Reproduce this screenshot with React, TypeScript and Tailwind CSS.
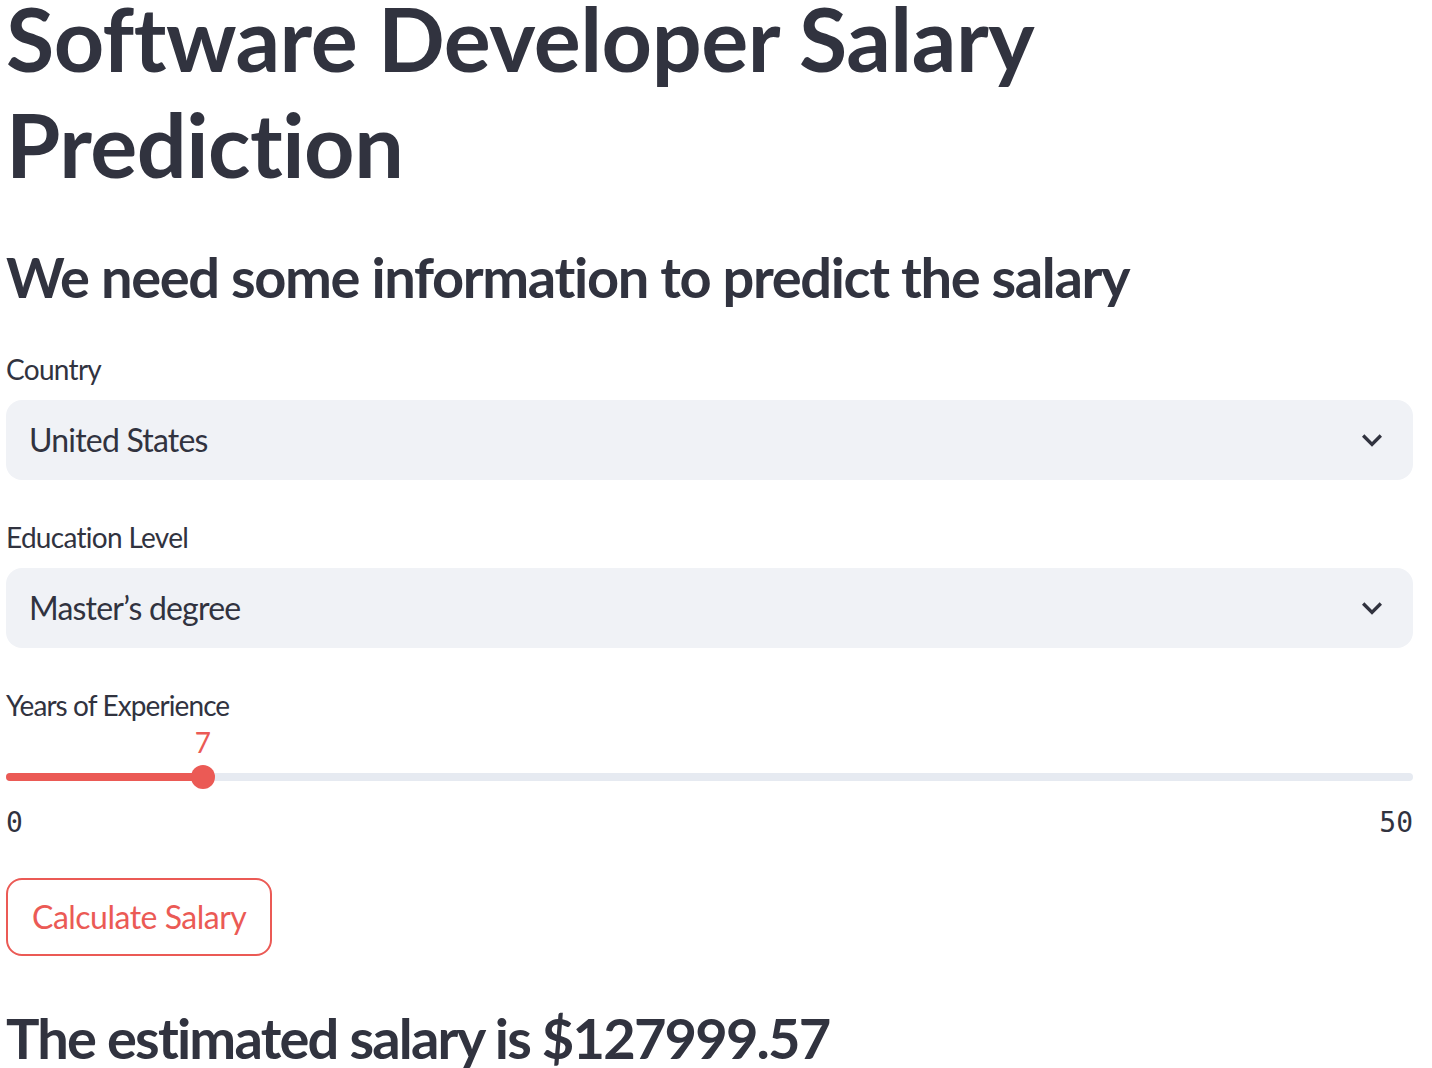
import React from "react";

const Chevron = () => (
  <svg width="40" height="40" viewBox="0 0 24 24" className="shrink-0">
    <path d="M16.59 8.59L12 13.17 7.41 8.59 6 10l6 6 6-6z" fill="#31333F" />
  </svg>
);

const Select = ({ value }: { value: string }) => (
  <div className="h-[80px] rounded-[16px] bg-[#F0F2F6] flex items-center justify-between pl-[23px] pr-[21px]">
    <span className="text-[32px] leading-none tracking-[-0.8px]">{value}</span>
    <Chevron />
  </div>
);

export default function App() {
  const pct = 7 / 50;
  return (
    <div
      className="w-[1432px] h-[1068px] overflow-hidden bg-white text-[#31333F]"
      style={{ fontFamily: "Lato, 'Noto Sans', sans-serif" }}
    >
      <div className="ml-[6px] w-[1407px]">
        <h1 className="text-[88px] leading-[105.6px] font-bold mt-[-14px] tracking-[-0.5px]">
          Software Developer Salary
          <br />
          Prediction
        </h1>
        <h3 className="text-[56px] leading-[67px] font-bold mt-[46px] tracking-[-1.35px] whitespace-nowrap">
          We need some information to predict the salary
        </h3>
        <div className="mt-[41px] text-[28px] leading-[36px] tracking-[-0.7px]">Country</div>
        <div className="mt-[13px]">
          <Select value="United States" />
        </div>
        <div className="mt-[39px] text-[28px] leading-[36px] tracking-[-0.7px]">Education Level</div>
        <div className="mt-[13px]">
          <Select value="Master’s degree" />
        </div>
        <div className="mt-[39px] text-[28px] leading-[36px] tracking-[-0.9px]">Years of Experience</div>
        <div className="relative h-[82px]">
          <div className="absolute left-0 right-0 top-[50px] h-[8px] rounded-full bg-[#E6EAF1]" />
          <div
            className="absolute left-0 top-[50px] h-[8px] rounded-full bg-[#EB5A55]"
            style={{ width: `${pct * 100}%` }}
          />
          <div
            className="absolute top-[42px] w-[24px] h-[24px] rounded-full bg-[#EB5A55] -translate-x-1/2"
            style={{ left: `${pct * 100}%` }}
          />
          <div
            className="absolute top-[1px] text-[28px] leading-[36px] text-[#EB5A55] -translate-x-1/2"
            style={{ left: `${pct * 100}%` }}
          >
            7
          </div>
        </div>
        <div
          className="flex justify-between text-[28px] leading-[36px]"
          style={{ fontFamily: "'DejaVu Sans Mono', monospace" }}
        >
          <span>0</span>
          <span>50</span>
        </div>
        <button className="mt-[37px] h-[78px] px-[24px] rounded-[16px] border-2 border-[#EB5A55] text-[#EB5A55] text-[32px] leading-none tracking-[-0.5px] bg-white">
          Calculate Salary
        </button>
        <h3 className="text-[56px] leading-[67px] font-bold mt-[48px] tracking-[-1.8px] whitespace-nowrap">
          The estimated salary is $127999.57
        </h3>
      </div>
    </div>
  );
}
